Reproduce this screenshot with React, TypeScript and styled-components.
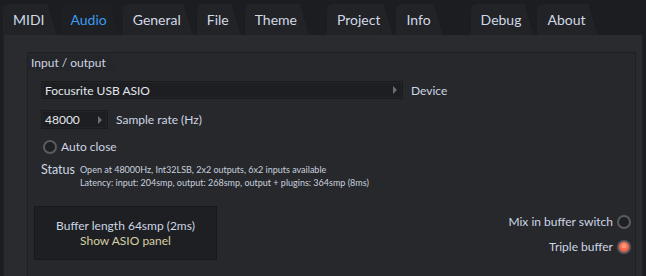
import React from 'react';
import styled, { createGlobalStyle, css } from 'styled-components';

const GlobalStyle = createGlobalStyle`
  html, body {
    margin: 0;
    padding: 0;
    background: #1c1d20;
  }
  body {
    font-family: Lato, 'Open Sans', sans-serif;
    color: #cdd6e4;
  }
`;

const Window = styled.div`
  width: 646px;
  height: 276px;
  overflow: hidden;
  display: flex;
  flex-direction: column;
  background: #1c1d20;
`;

const TabBar = styled.div`
  height: 35px;
  flex: none;
  display: flex;
  align-items: flex-end;
  padding-left: 3px;
  gap: 4px;
`;

const Tab = styled.div<{ $active?: boolean; $space?: number }>`
  position: relative;
  height: 31px;
  display: flex;
  align-items: center;
  padding: 0 1px 0 10px;
  margin-left: ${(p) => p.$space ?? 0}px;
  margin-right: 11px;
  background: ${(p) => (p.$active ? '#1e1f22' : '#222327')};
  border-top-left-radius: 6px;
  font-size: 14px;
  color: ${(p) => (p.$active ? '#3b9cf0' : '#d0d9e6')};
  &::after {
    content: '';
    position: absolute;
    top: 0;
    right: -11px;
    width: 12px;
    height: 100%;
    background: inherit;
    clip-path: polygon(0 0, 25% 0, 100% 100%, 0 100%);
  }
`;

const Page = styled.div`
  flex: 1;
  margin: 0 3px;
  background: #2a2b2f;
  border-left: 1px solid #202124;
  border-right: 1px solid #202124;
  padding: 17px 6px 0 23px;
  display: flex;
`;

const Group = styled.div`
  flex: 1;
  background: #27282c;
  border: 1px solid #1f2023;
  border-bottom: none;
  display: flex;
  flex-direction: column;
`;

const GroupHeader = styled.div`
  display: flex;
`;

const GroupTitle = styled.div`
  position: relative;
  height: 18px;
  display: flex;
  align-items: center;
  padding: 0 2px 0 3px;
  background: #252629;
  font-size: 12px;
  &::after {
    content: '';
    position: absolute;
    top: 0;
    right: -9px;
    width: 10px;
    height: 100%;
    background: inherit;
    clip-path: polygon(0 0, 20% 0, 100% 100%, 0 100%);
  }
`;

const Body = styled.div`
  padding: 10px 13px 0 13px;
  display: flex;
  flex-direction: column;
`;

const Row = styled.div<{ $gap?: number }>`
  display: flex;
  align-items: center;
  gap: 8px;
  margin-bottom: ${(p) => p.$gap ?? 0}px;
`;

const Combo = styled.div<{ $width: number; $height: number }>`
  width: ${(p) => p.$width}px;
  height: ${(p) => p.$height}px;
  box-sizing: border-box;
  background: #1d1e21;
  border: 1px solid #1a1b1d;
  box-shadow: inset 0 0 0 1px #232427;
  display: flex;
  align-items: center;
  justify-content: space-between;
  padding: 0 5px 0 3px;
  font-size: 12px;
  color: #e2e6ee;
`;

const Arrow = styled.span`
  width: 0;
  height: 0;
  border-top: 4px solid transparent;
  border-bottom: 4px solid transparent;
  border-left: 4px solid #6c6e73;
`;

const Label = styled.span`
  font-size: 12px;
  color: #cdd6e4;
`;

const Radio = styled.span<{ $on?: boolean }>`
  width: 14px;
  height: 14px;
  box-sizing: border-box;
  border-radius: 50%;
  border: 2px solid #5a5b5f;
  flex: none;
  ${(p) =>
    p.$on
      ? css`
          background: radial-gradient(circle at 50% 40%, #ffb09a 0, #ff6b4e 45%, #e8452c 100%);
        `
      : css`
          background: #1f2023;
        `}
`;

const RadioRow = styled.div<{ $right?: boolean }>`
  display: flex;
  align-items: center;
  gap: 4px;
  justify-content: ${(p) => (p.$right ? 'flex-end' : 'flex-start')};
  padding-left: ${(p) => (p.$right ? 0 : 2)}px;
`;

const StatusRow = styled.div`
  display: flex;
  gap: 5px;
  margin-top: 9px;
`;

const StatusKey = styled.span`
  font-size: 12.5px;
  line-height: 13px;
`;

const StatusText = styled.div`
  font-size: 9px;
  line-height: 13px;
  color: #c8d1df;
`;

const Bottom = styled.div`
  display: flex;
  justify-content: space-between;
  padding: 17px 4px 0 6px;
`;

const BufferButton = styled.div`
  width: 183px;
  height: 54px;
  box-sizing: border-box;
  background: #1e1f22;
  border: 1px solid #17181a;
  display: flex;
  flex-direction: column;
  align-items: center;
  justify-content: center;
  gap: 1px;
  font-size: 12px;
  line-height: 14px;
`;

const AsioText = styled.span`
  color: #d4cfa4;
`;

const Switches = styled.div`
  display: flex;
  flex-direction: column;
  gap: 10px;
  padding-top: 8px;
`;

export default function App() {
  return (
    <>
      <GlobalStyle />
      <Window>
        <TabBar>
          <Tab>MIDI</Tab>
          <Tab $active>Audio</Tab>
          <Tab>General</Tab>
          <Tab>File</Tab>
          <Tab>Theme</Tab>
          <Tab $space={14}>Project</Tab>
          <Tab>Info</Tab>
          <Tab $space={24}>Debug</Tab>
          <Tab>About</Tab>
        </TabBar>
        <Page>
          <Group>
            <GroupHeader>
              <GroupTitle>Input / output</GroupTitle>
            </GroupHeader>
            <Body>
              <Row $gap={11}>
                <Combo $width={362} $height={18}>
                  Focusrite USB ASIO
                  <Arrow />
                </Combo>
                <Label>Device</Label>
              </Row>
              <Row $gap={10}>
                <Combo $width={67} $height={19}>
                  48000
                  <Arrow />
                </Combo>
                <Label>Sample rate (Hz)</Label>
              </Row>
              <RadioRow>
                <Radio />
                <Label>Auto close</Label>
              </RadioRow>
              <StatusRow>
                <StatusKey>Status</StatusKey>
                <StatusText>
                  Open at 48000Hz, Int32LSB, 2x2 outputs, 6x2 inputs available
                  <br />
                  Latency: input: 204smp, output: 268smp, output + plugins: 364smp (8ms)
                </StatusText>
              </StatusRow>
            </Body>
            <Bottom>
              <BufferButton>
                <span>Buffer length 64smp (2ms)</span>
                <AsioText>Show ASIO panel</AsioText>
              </BufferButton>
              <Switches>
                <RadioRow $right>
                  <Label>Mix in buffer switch</Label>
                  <Radio />
                </RadioRow>
                <RadioRow $right>
                  <Label>Triple buffer</Label>
                  <Radio $on />
                </RadioRow>
              </Switches>
            </Bottom>
          </Group>
        </Page>
      </Window>
    </>
  );
}
